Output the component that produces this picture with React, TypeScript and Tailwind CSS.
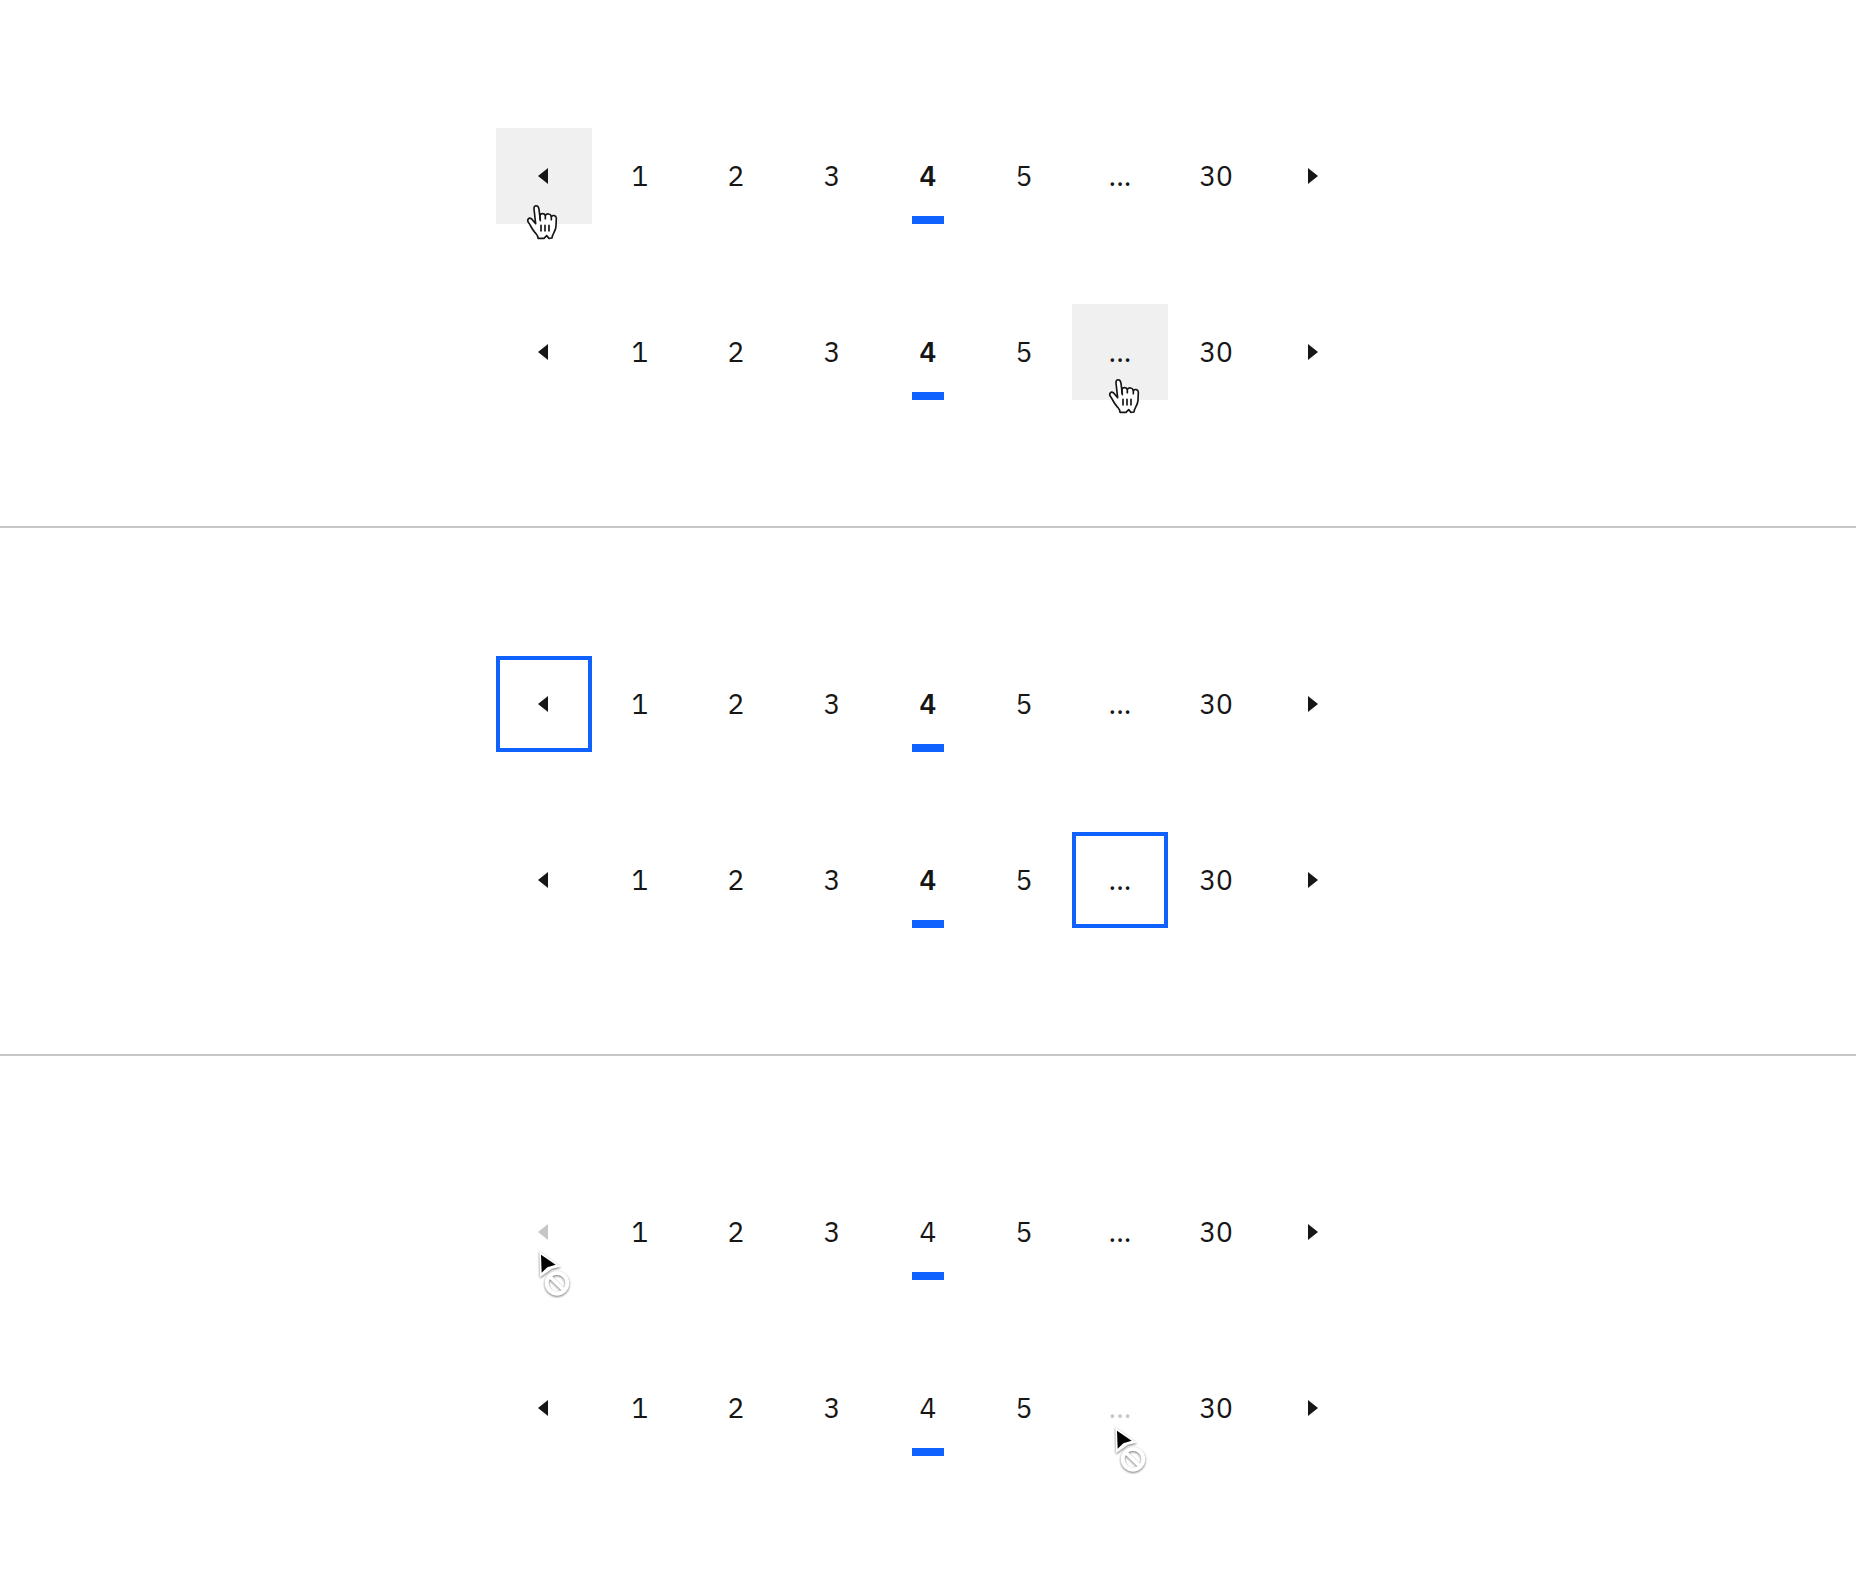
import React from "react";

type Cell = "prev" | "ellipsis" | null;
type Mode = "hover" | "focus" | "disabled";

function Caret({ dir }: { dir: "left" | "right" }) {
  return (
    <svg viewBox="0 0 32 32" className="size-8 fill-current" aria-hidden="true">
      {dir === "left" ? <path d="M20 24 10 16l10-8z" /> : <path d="M12 8l10 8-10 8z" />}
    </svg>
  );
}

function HandCursor({ place }: { place: string }) {
  return (
    <svg
      viewBox="0 0 108 120"
      className={"pointer-events-none absolute z-10 h-10 w-9 " + place}
      fill="#fff"
      stroke="#161616"
      strokeWidth="5"
      strokeLinejoin="round"
      strokeLinecap="round"
      aria-hidden="true"
    >
      <path d="M49 56 L45 22 C43 8 29 8 30 21 L35 65 L23 51 C15 45 8 52 13 61 C21 72 23 80 31 89 C38 98 42 99 42 109 L60 109 L68 101 L75 109 L84 108 C84 97 95 89 96 73 L97 48 C96 39 86 39 82 44 C80 34 68 34 64 40 C60 33 51 34 48 39" />
      <path d="M48 39V51M64 40V50M82 44V53" fill="none" />
      <path d="M51 70V87M63 70V87M75 70V87" fill="none" />
    </svg>
  );
}

function BlockedCursor() {
  return (
    <svg
      viewBox="0 0 132 162"
      className="pointer-events-none absolute top-[62px] left-9 z-10 h-[54px] w-11 overflow-visible drop-shadow-[0_1px_1px_rgba(0,0,0,0.55)]"
      aria-hidden="true"
    >
      <path d="M22 14 L86 62 L60 68 L24 94z" fill="#fff" />
      <path d="M27 26 L71 56 L46 64 L29 80z" fill="#000" />
      <circle cx="75" cy="112" r="31" fill="none" stroke="#fff" strokeWidth="12" />
      <path d="M53 91 L97 134" stroke="#fff" strokeWidth="11" />
    </svg>
  );
}

function PageNav({ mode, target, label }: { mode: Mode; target: Cell; label: string }) {
  const cell = (kind: Cell) => {
    const base = "flex size-24 items-center justify-center";
    if (kind === null || kind !== target) return base;
    if (mode === "hover") return base + " bg-[#f0f0f0]";
    if (mode === "focus") return base + " border-4 border-[#0f62fe]";
    return base + " text-[#c6c6c6]";
  };
  const pointer = (kind: Cell) => {
    if (kind !== target || mode === "focus") return null;
    if (mode === "disabled") return <BlockedCursor />;
    return <HandCursor place={kind === "prev" ? "top-[74px] left-7" : "top-[72px] left-[34px]"} />;
  };
  return (
    <nav aria-label={label}>
      <ul className="flex justify-center text-[28px] leading-9">
        <li className="relative">
          <button aria-label="Previous page" disabled={mode === "disabled" && target === "prev"} className={cell("prev")}>
            <Caret dir="left" />
          </button>
          {pointer("prev")}
        </li>
        {["1", "2", "3", "4", "5"].map((n) => (
          <li key={n} className="relative">
            <button aria-current={n === "4" ? "page" : undefined} className={cell(null)}>
              <span className={n === "4" && mode !== "disabled" ? "font-semibold" : ""}>{n}</span>
            </button>
            {n === "4" && <span className="absolute bottom-0 left-8 h-2 w-8 bg-[#0f62fe]" />}
          </li>
        ))}
        <li className="relative">
          <button aria-label="More pages" disabled={mode === "disabled" && target === "ellipsis"} className={cell("ellipsis")}>
            ...
          </button>
          {pointer("ellipsis")}
        </li>
        <li>
          <button className={cell(null)}>30</button>
        </li>
        <li>
          <button aria-label="Next page" className={cell(null)}>
            <Caret dir="right" />
          </button>
        </li>
      </ul>
    </nav>
  );
}

const modes: Mode[] = ["hover", "focus", "disabled"];

export default function App() {
  return (
    <main className="min-h-screen divide-y-2 divide-[#c6c6c6] bg-white font-['IBM_Plex_Sans','Lato',sans-serif] text-[#161616]">
      {modes.map((mode) => (
        <section key={mode} className="flex flex-col gap-20 pt-32 pb-[126px]">
          <PageNav mode={mode} target="prev" label={mode + " previous button"} />
          <PageNav mode={mode} target="ellipsis" label={mode + " overflow button"} />
        </section>
      ))}
    </main>
  );
}
